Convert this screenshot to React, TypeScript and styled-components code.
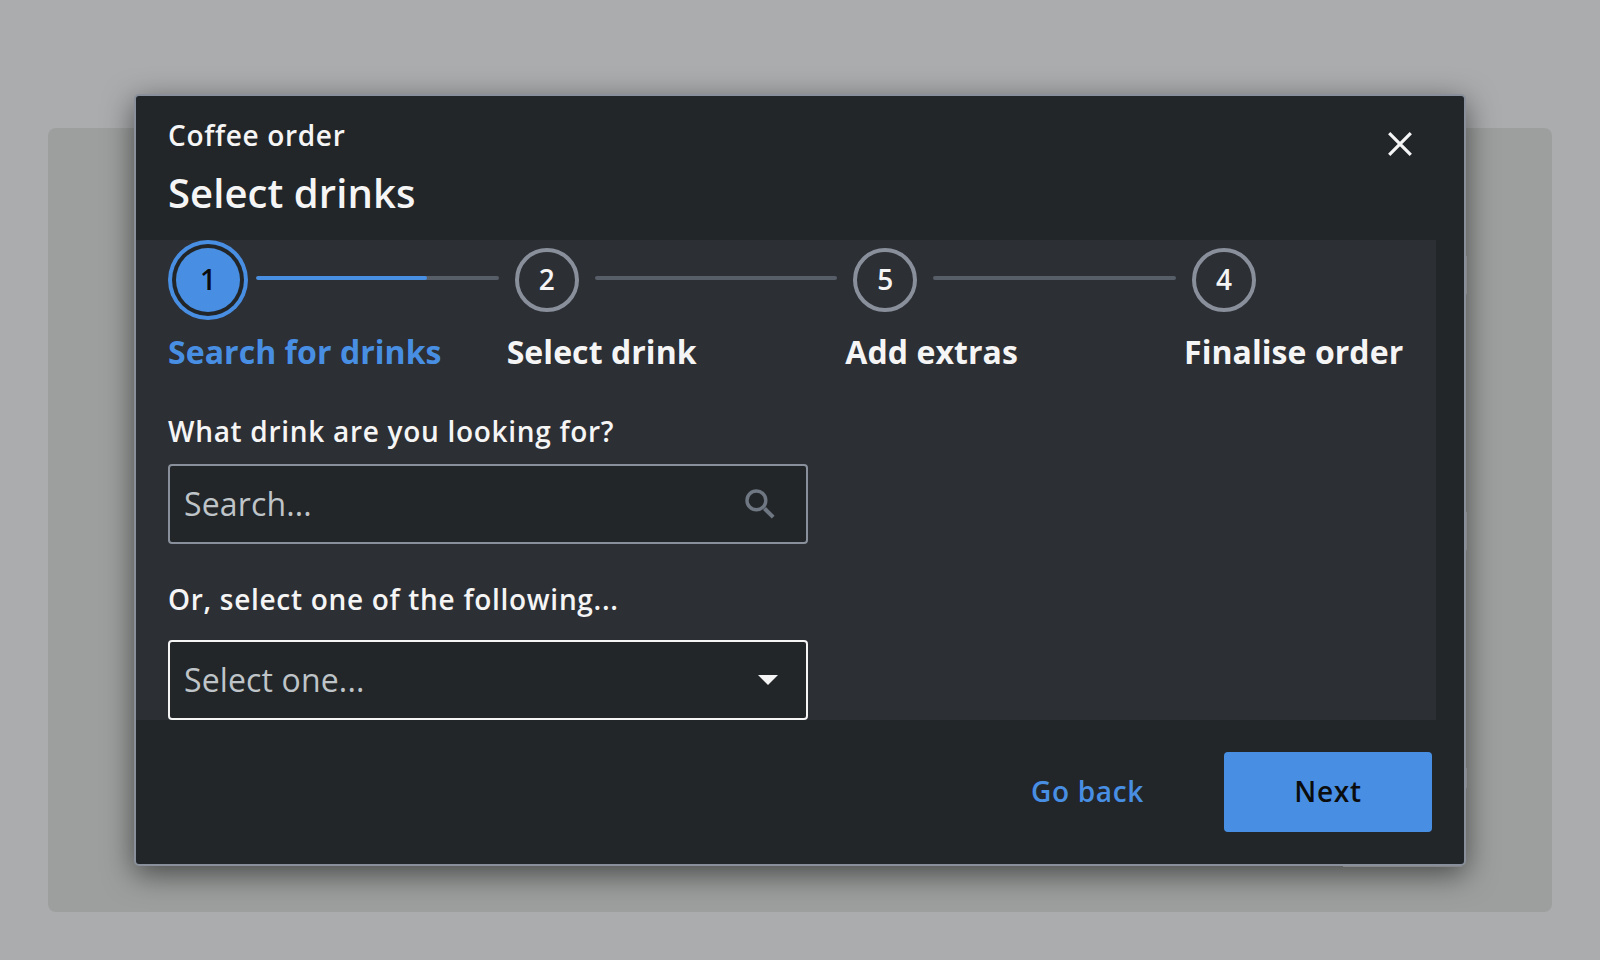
import React from "react";
import styled, { createGlobalStyle, css } from "styled-components";

const GlobalStyle = createGlobalStyle`
  *, *::before, *::after { box-sizing: border-box; }
  body {
    margin: 0;
    background: #abacae;
    font-family: "Open Sans", "Noto Sans", sans-serif;
    color: #f5f5f5;
  }
`;

const Page = styled.div`
  height: 960px;
  padding: 128px 48px 48px;
  overflow: hidden;
`;

const Backdrop = styled.div`
  height: 784px;
  border-radius: 8px;
  background: #9c9f9d;
  display: flex;
  justify-content: center;
  align-items: flex-start;
`;

const Dialog = styled.section`
  position: relative;
  width: 1332px;
  height: 772px;
  margin-top: -34px;
  border: 2px solid #89909b;
  border-radius: 5px;
  background: #222629;
  box-shadow: 0 8px 30px rgba(0, 0, 0, 0.54);
  display: flex;
  flex-direction: column;
`;

const EdgeMark = styled.i<{ $top: number; $height: number }>`
  position: absolute;
  left: 1330px;
  top: ${(p) => p.$top}px;
  width: 1px;
  height: ${(p) => p.$height}px;
  background: #858789;
`;

const BottomMark = styled.i`
  position: absolute;
  right: 2px;
  bottom: -3px;
  width: 119px;
  height: 1px;
  background: #858789;
`;

const Header = styled.header`
  height: 144px;
  padding: 19px 44px 0 32px;
  display: flex;
  justify-content: space-between;
  align-items: flex-start;
`;

const Subtitle = styled.div`
  font-size: 28px;
  line-height: 40px;
  font-weight: 600;
  letter-spacing: 0.66px;
`;

const Title = styled.h1`
  margin: 10px 0 0;
  font-size: 40px;
  line-height: 56px;
  font-weight: 600;
  letter-spacing: 0.08px;
`;

const CloseButton = styled.button`
  width: 40px;
  height: 40px;
  margin-top: 9px;
  padding: 0;
  border: 0;
  background: none;
  color: inherit;
  display: grid;
  place-items: center;
`;

const Body = styled.main`
  width: 1300px;
  height: 480px;
  padding: 0 32px;
  background: #2c2f34;
`;

const Steps = styled.ol`
  margin: 0;
  padding: 0;
  list-style: none;
  display: flex;
`;

const StepItem = styled.li<{ $last: boolean }>`
  flex: ${(p) => (p.$last ? "0 0 220px" : "1 1 0")};
  min-width: 0;
`;

const StepTrack = styled.div`
  display: flex;
  height: 80px;
`;

const Marker = styled.span<{ $active: boolean }>`
  flex: none;
  width: 64px;
  height: 64px;
  margin: 8px;
  padding-bottom: 2px;
  border-radius: 50%;
  display: grid;
  place-items: center;
  font-size: 28px;
  line-height: 40px;
  font-weight: 600;
  ${(p) =>
    p.$active
      ? css`
          background: #488fe4;
          color: #0b0c0d;
          box-shadow: 0 0 0 4px #222629, 0 0 0 8px #488fe4;
        `
      : css`
          border: 4px solid #89909b;
        `}
`;

const Connector = styled.span`
  flex: 1;
  height: 4px;
  margin: 36px 8px 0;
  border-radius: 2px;
  background: #575e67;
  overflow: hidden;
`;

const Progress = styled.span`
  display: block;
  width: 70.3%;
  height: 4px;
  border-radius: 2px;
  background: #488fe4;
`;

const StepLabel = styled.div<{ $active: boolean }>`
  margin-top: 8px;
  font-size: 32px;
  line-height: 48px;
  font-weight: 700;
  letter-spacing: 0.06px;
  white-space: nowrap;
  color: ${(p) => (p.$active ? "#488fe4" : "#f5f5f5")};
`;

const FieldLabel = styled.div<{ $top: number; $bottom: number }>`
  margin: ${(p) => `${p.$top}px 0 ${p.$bottom}px`};
  font-size: 28px;
  line-height: 40px;
  font-weight: 600;
  letter-spacing: 0.7px;
`;

const Field = styled.div<{ $border: string; $right: number }>`
  width: 640px;
  height: 80px;
  padding: 0 ${(p) => p.$right}px 0 14px;
  border: 2px solid ${(p) => p.$border};
  border-radius: 4px;
  background: #222629;
  display: flex;
  align-items: center;
  justify-content: space-between;
`;

const Placeholder = styled.span`
  font-size: 32px;
  line-height: 48px;
  letter-spacing: 0.14px;
  color: #bfc4c8;
`;

const Footer = styled.footer`
  padding: 32px 32px 0;
  display: flex;
  justify-content: flex-end;
`;

const Button = styled.button<{ $primary?: boolean }>`
  height: 80px;
  width: ${(p) => (p.$primary ? 208 : 273)}px;
  padding: 0 0 2px;
  border: 0;
  border-radius: 4px;
  background: ${(p) => (p.$primary ? "#488fe4" : "transparent")};
  color: ${(p) => (p.$primary ? "#0b0c0d" : "#488fe4")};
  font: 600 28px/40px "Open Sans", "Noto Sans", sans-serif;
  letter-spacing: 0.7px;
`;

const steps = [
  { mark: "1", label: "Search for drinks" },
  { mark: "2", label: "Select drink" },
  { mark: "5", label: "Add extras" },
  { mark: "4", label: "Finalise order" },
];

export default function App() {
  return (
    <Page>
      <GlobalStyle />
      <Backdrop>
        <Dialog>
          <Header>
            <div>
              <Subtitle>Coffee order</Subtitle>
              <Title>Select drinks</Title>
            </div>
            <CloseButton aria-label="Close">
              <svg width="24" height="24" viewBox="0 0 24 24">
                <path d="M1.2 1.2 22.8 22.8M22.8 1.2 1.2 22.8" stroke="currentColor" strokeWidth="3.2" fill="none" />
              </svg>
            </CloseButton>
          </Header>
          <Body>
            <Steps>
              {steps.map((step, i) => (
                <StepItem key={step.label} $last={i === steps.length - 1}>
                  <StepTrack>
                    <Marker $active={i === 0}>{step.mark}</Marker>
                    {i < steps.length - 1 && <Connector>{i === 0 && <Progress />}</Connector>}
                  </StepTrack>
                  <StepLabel $active={i === 0}>{step.label}</StepLabel>
                </StepItem>
              ))}
            </Steps>
            <FieldLabel $top={35} $bottom={13}>What drink are you looking for?</FieldLabel>
            <Field $border="#89909b" $right={31}>
              <Placeholder>Search...</Placeholder>
              <svg width="30" height="30" viewBox="0 0 30 30" fill="none" stroke="#6f7782">
                <circle cx="11.4" cy="11.4" r="9.4" strokeWidth="3.4" />
                <path d="M19.5 19.5 28.2 28.2" strokeWidth="4" />
              </svg>
            </Field>
            <FieldLabel $top={35} $bottom={21}>Or, select one of the following...</FieldLabel>
            <Field $border="#f5f5f5" $right={28}>
              <Placeholder>Select one...</Placeholder>
              <svg width="20" height="10" viewBox="0 0 20 10">
                <path d="M0 0H20L10 10Z" fill="#f5f5f5" />
              </svg>
            </Field>
          </Body>
          <Footer>
            <Button>Go back</Button>
            <Button $primary>Next</Button>
          </Footer>
          <EdgeMark $top={160} $height={38} />
          <EdgeMark $top={416} $height={38} />
          <EdgeMark $top={672} $height={20} />
          <BottomMark />
        </Dialog>
      </Backdrop>
    </Page>
  );
}
